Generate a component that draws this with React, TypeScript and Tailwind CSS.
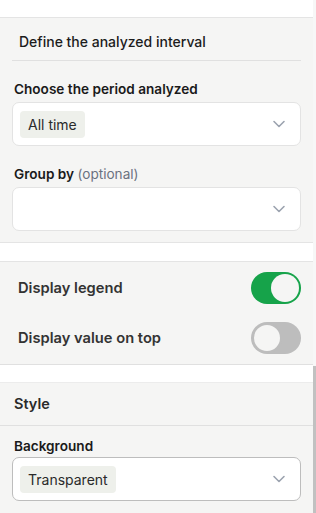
import React from "react";

function Chevron() {
  return (
    <svg width="14" height="14" viewBox="0 0 14 14" fill="none" className="shrink-0">
      <path d="M2 4.5 L7 9.5 L12 4.5" stroke="#9ca3af" strokeWidth="1.6" strokeLinecap="round" strokeLinejoin="round" />
    </svg>
  );
}

function Select({ value, strong }: { value?: string; strong?: boolean }) {
  return (
    <div
      className={`flex items-center justify-between h-[44px] bg-white rounded-[7px] border pl-[7px] pr-[14px] ${
        strong ? "border-[#bdbdbd]" : "border-[#e3e3e3]"
      }`}
    >
      {value ? (
        <span className="bg-[#eef0eb] rounded-[4px] h-[27px] px-2 flex items-center text-[14px] text-[#2a2a2a]">
          {value}
        </span>
      ) : (
        <span />
      )}
      <Chevron />
    </div>
  );
}

function Toggle({ on }: { on: boolean }) {
  return on ? (
    <div className="w-[50px] h-[32px] rounded-full bg-[#16a34a] flex items-center justify-end pr-[2px]">
      <div className="w-[28px] h-[28px] rounded-full bg-[#f5f5f4]" />
    </div>
  ) : (
    <div className="w-[50px] h-[32px] rounded-full bg-[#bdbdbd] flex items-center pl-[1px]">
      <div className="w-[30px] h-[30px] rounded-full bg-[#f5f5f4] border-2 border-[#bdbdbd]" />
    </div>
  );
}

export default function App() {
  return (
    <div
      className="w-[316px] h-[513px] overflow-hidden flex bg-white"
      style={{ fontFamily: "Inter, 'Noto Sans', sans-serif" }}
    >
      <div className="w-[313px] flex flex-col">
        <div className="h-[18px] bg-white border-b border-[#e4e4e4] shrink-0" />
        <div className="bg-[#f5f5f4] px-3 pb-[11px] border-b border-[#e4e4e4] shrink-0">
          <div className="pt-[15px] pb-[9px] px-[7px] border-b border-[#e0e0e0] text-[14px] leading-[18px] font-medium text-[#1c1c1c]">
            Define the analyzed interval
          </div>
          <div className="mt-[18px] text-[13.6px] leading-[20px] font-semibold text-[#1a1a1a] px-[2px]">
            Choose the period analyzed
          </div>
          <div className="mt-[3px]">
            <Select value="All time" />
          </div>
          <div className="mt-[18px] text-[13.6px] leading-[20px] font-semibold text-[#1a1a1a] px-[2px]">
            Group by <span className="font-normal text-[#6b7280]">(optional)</span>
          </div>
          <div className="mt-[3px]">
            <Select />
          </div>
        </div>
        <div className="h-[19px] bg-white border-b border-[#e4e4e4] shrink-0" />
        <div className="bg-[#f5f5f4] pl-[18px] pr-3 pt-[10px] pb-[10px] flex flex-col gap-[18px] border-b border-[#e0e0e0] shrink-0">
          <div className="flex items-center justify-between">
            <span className="text-[14.7px] font-semibold text-[#333]">Display legend</span>
            <Toggle on />
          </div>
          <div className="flex items-center justify-between">
            <span className="text-[14.7px] font-semibold text-[#333]">Display value on top</span>
            <Toggle on={false} />
          </div>
        </div>
        <div className="h-[18px] bg-white border-b border-[#ececec] shrink-0" />
        <div className="bg-[#f5f5f4] flex-1">
          <div className="h-[43px] px-[14px] flex items-center border-b border-[#e0e0e0] text-[14.5px] font-semibold text-[#2a2a2a]">
            Style
          </div>
          <div className="px-3">
            <div className="mt-[10px] text-[13.6px] leading-[20px] font-semibold text-[#1a1a1a] px-[2px]">
              Background
            </div>
            <div className="mt-[1px]">
              <Select value="Transparent" strong />
            </div>
          </div>
        </div>
      </div>
      <div className="w-[3px] bg-[#f7f7f7] flex flex-col">
        <div className="h-[366px]" />
        <div className="flex-1 bg-[#c1c1c1]" />
      </div>
    </div>
  );
}
